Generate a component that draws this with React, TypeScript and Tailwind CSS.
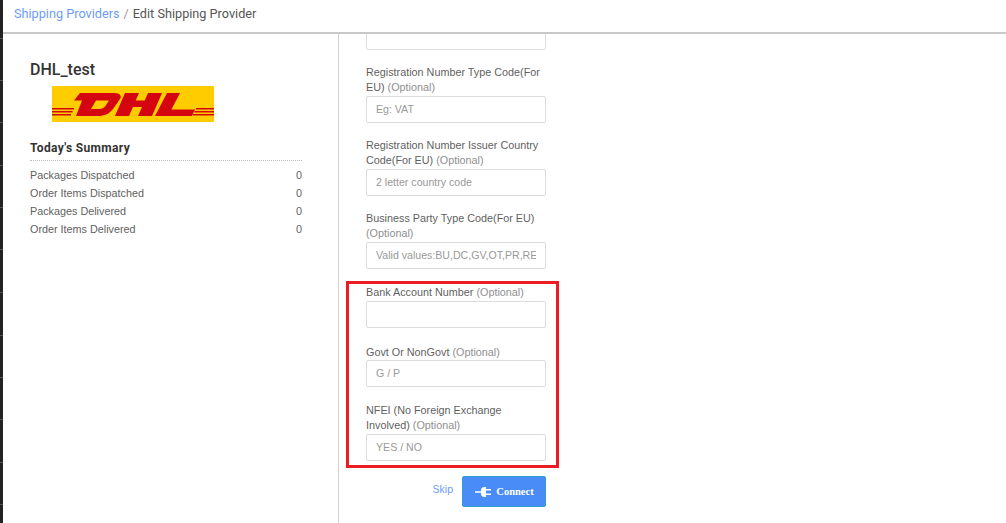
import React from "react";

function Field({ text, placeholder = "", mt, gap = "mt-[1px]" }: { text: string; placeholder?: string; mt: string; gap?: string }) {
  return (
    <div className={mt}>
      <label className="block w-[180px] text-[10.8px] leading-[15px] text-[#5f5f5f]">
        {text} <span className="text-[#8f8f8f]">(Optional)</span>
      </label>
      <input
        readOnly
        placeholder={placeholder}
        className={`${gap} block h-[27px] w-[180px] rounded-[2px] border border-[#dcdcdc] bg-white px-[9px] pb-[1px] text-[10.6px] text-[#555] placeholder:text-[#999] outline-none`}
      />
    </div>
  );
}

function DhlLogo() {
  return (
    <svg width="162" height="36" viewBox="0 0 162 36" className="block">
      <rect width="162" height="36" fill="#ffcc00" />
      <g fill="#d40511">
        <rect x="0" y="22" width="22" height="1.5" />
        <rect x="0" y="25" width="20.5" height="1.5" />
        <rect x="0" y="28" width="19" height="1.5" />
        <rect x="144" y="22" width="18" height="1.5" />
        <rect x="142.5" y="25" width="19.5" height="1.5" />
        <rect x="141" y="28" width="21" height="1.5" />
        <path
          fillRule="evenodd"
          d="M28 7H62C68 7 70 10 68 13L61 23C57 28 52 30 46 30H24L30 14.5H22ZM44 14.5L39 23H47C50 23 52 22 53 20.5L57 14.5Z"
        />
        <path d="M73 7H87L83.7 14.5H92.7L96 7H110L100 30H86L90 21H81L77 30H63Z" />
        <path d="M115 7H128L119.4 23.5H143L140 30H103Z" />
      </g>
    </svg>
  );
}

const stats = ["Packages Dispatched", "Order Items Dispatched", "Packages Delivered", "Order Items Delivered"];
const ticks = [39, 42, 42, 43, 42, 42, 43, 43, 42, 42, 43, 42];

export default function App() {
  return (
    <div className="flex h-[523px] w-[1006px] overflow-hidden bg-white font-['Liberation_Sans',Arial,sans-serif]">
      <div className="w-[3px] shrink-0 bg-[#232323]">
        {ticks.map((h, i) => (
          <div key={i} style={{ height: h }} className="border-b border-[#555]" />
        ))}
      </div>
      <div className="flex min-w-0 flex-1 flex-col">
        <header className="flex h-[34px] shrink-0 items-start border-b-2 border-[#c8c8c8] pl-[11px] pt-[5px] text-[12.7px] leading-[18px] font-['Roboto',sans-serif] text-[#555]">
          <span className="text-[#6d9cf8]">Shipping Providers</span>
          <span className="mx-[4px] text-[#999]">/</span>
          <span>Edit Shipping Provider</span>
        </header>
        <div className="flex min-h-0 flex-1">
          <aside className="w-[336px] shrink-0 border-r border-[#d0d0d0] pl-[27px] pr-[36px] pt-[26px]">
            <h1 className="text-[16px] font-medium leading-[20px] text-[#333] font-['Roboto',sans-serif]">DHL_test</h1>
            <div className="mt-[6px] ml-[22px]">
              <DhlLogo />
            </div>
            <h2 className="mt-[19px] border-b border-dotted border-[#bbb] pb-[4px] text-[12px] font-bold leading-[15px] tracking-[0.35px] text-[#333] font-['Roboto',sans-serif]">
              Today's Summary
            </h2>
            <ul className="mt-[5px] text-[10.8px] leading-[18px] text-[#5f5f5f]">
              {stats.map((s) => (
                <li key={s} className="flex justify-between">
                  <span>{s}</span>
                  <span>0</span>
                </li>
              ))}
            </ul>
          </aside>
          <main className="relative flex-1 overflow-hidden pl-[27px]">
            <div className="-mt-[11px] h-[27px] w-[180px] rounded-[2px] border border-[#dcdcdc]" />
            <Field mt="mt-[15px]" text="Registration Number Type Code(For EU)" placeholder="Eg: VAT" />
            <Field mt="mt-[15px]" text="Registration Number Issuer Country Code(For EU)" placeholder="2 letter country code" />
            <Field mt="mt-[15px]" text="Business Party Type Code(For EU)" placeholder="Valid values:BU,DC,GV,OT,PR,RE" />
            <Field mt="mt-[16px]" text="Bank Account Number" />
            <Field mt="mt-[17px]" gap="mt-0" text="Govt Or NonGovt" placeholder="G / P" />
            <Field mt="mt-[16px]" text="NFEI (No Foreign Exchange Involved)" placeholder="YES / NO" />
            <div className="mt-[15px] flex w-[180px] items-start justify-end gap-[9px]">
              <a className="pt-[6px] text-[10.5px] leading-[15px] text-[#6d9cf8]">Skip</a>
              <button className="flex h-[31px] w-[84px] items-center justify-center gap-[4px] rounded-[2px] border border-[#2f9fd0] bg-[#4a8cf7] pl-[1px] text-[10.5px] font-bold text-white font-['Liberation_Serif',serif]">
                <svg width="17" height="10" viewBox="0 0 17 10">
                  <path d="M0 4.3h6V3C6 1.2 7.5 0 9.5 0H11v2h5v1.5h-5v3h5V8h-5v2H9.5C7.5 10 6 8.8 6 7V5.7H0z" fill="#fff" />
                </svg>
                Connect
              </button>
            </div>
            <div className="pointer-events-none absolute left-[7px] top-[247px] h-[187px] w-[213px] border-[3px] border-[#ed1c24]" />
          </main>
        </div>
      </div>
    </div>
  );
}
